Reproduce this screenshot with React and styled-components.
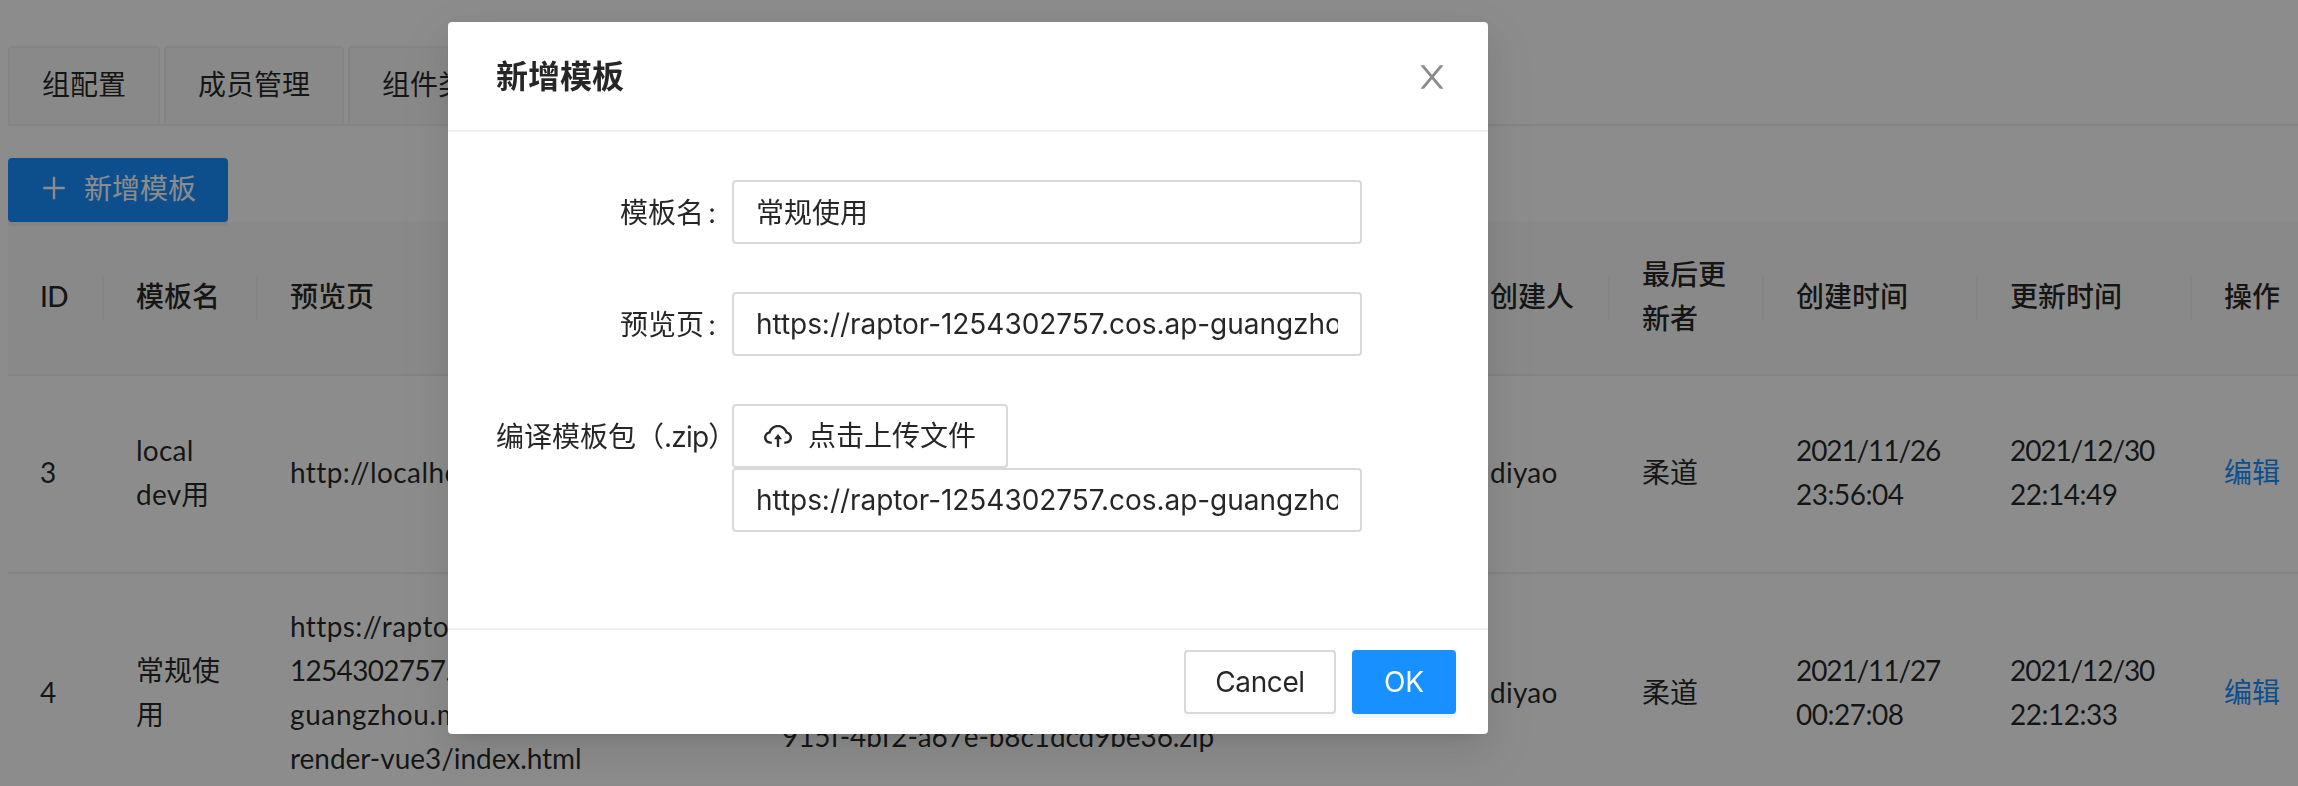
import React from "react";
import styled, { createGlobalStyle } from "styled-components";

const GlobalStyle = createGlobalStyle`
  * { box-sizing: border-box; }
  html, body { margin: 0; background: #fff; }
  body {
    overflow: hidden;
    color: rgba(0, 0, 0, 0.85);
    font-family: Lato, "Noto Sans CJK SC", sans-serif;
    font-size: 28px;
    line-height: 44px;
  }
`;

const Page = styled.div`
  height: 786px;
  overflow: hidden;
  padding: 46px 0 0 8px;
`;

const Tabs = styled.nav`
  display: flex;
  gap: 4px;
  height: 80px;
  margin-bottom: 32px;
  border-bottom: 2px solid #f0f0f0;
`;

const Tab = styled.div`
  height: 80px;
  padding: 14px 32px;
  white-space: nowrap;
  background: #fafafa;
  border: 2px solid #f0f0f0;
  border-radius: 4px 4px 0 0;
`;

const Button = styled.button`
  display: inline-flex;
  align-items: center;
  justify-content: center;
  gap: 16px;
  width: ${(p) => p.$width}px;
  height: 64px;
  padding: 0 0 ${(p) => p.$lift || 0}px;
  font: inherit;
  line-height: 44px;
  letter-spacing: ${(p) => p.$tracking || 0}px;
  white-space: nowrap;
  color: ${(p) => (p.$primary ? "#fff" : "rgba(0, 0, 0, 0.85)")};
  background: ${(p) => (p.$primary ? "#1890ff" : "#fff")};
  border: 2px solid ${(p) => (p.$primary ? "#1890ff" : "#d9d9d9")};
  border-radius: 4px;
  box-shadow: 0 4px 0 ${(p) => (p.$primary ? "rgba(0, 0, 0, 0.045)" : "rgba(0, 0, 0, 0.015)")};
`;

const PageAction = styled.div`
  display: flex;
  height: 64px;
`;

const Table = styled.table`
  width: 2304px;
  table-layout: fixed;
  border-collapse: separate;
  border-spacing: 0;
`;

const Col = styled.col`
  width: ${(p) => p.$width}px;
`;

const HeadCell = styled.th`
  padding: 32px 0 32px 32px;
  text-align: left;
  font-weight: 500;
  background: #fafafa;
  border-bottom: 2px solid #f0f0f0;
`;

const HeadLabel = styled.div`
  display: flex;
  align-items: center;
  justify-content: space-between;
  &::after {
    content: "";
    width: 2px;
    height: 44px;
    background: ${(p) => (p.$last ? "transparent" : "#f0f0f0")};
  }
`;

const Cell = styled.td`
  padding: 32px 0 32px 32px;
  vertical-align: middle;
  white-space: nowrap;
  border-bottom: 2px solid #f0f0f0;
`;

const Line = styled.div`
  height: 44px;
  line-height: 40px;
  letter-spacing: ${(p) => p.$tracking || 0}px;
`;

const EditLink = styled.a`
  color: #1890ff;
`;

const Mask = styled.div`
  position: fixed;
  inset: 0;
  padding: 22px 0 0 448px;
  background: rgba(0, 0, 0, 0.45);
`;

const Dialog = styled.section`
  width: 1040px;
  font-family: Inter, "Noto Sans CJK SC", sans-serif;
  background: #fff;
  border-radius: 4px;
  box-shadow: 0 6px 12px -8px rgba(0, 0, 0, 0.12), 0 12px 32px rgba(0, 0, 0, 0.08),
    0 18px 56px 16px rgba(0, 0, 0, 0.05);
`;

const DialogHeader = styled.header`
  display: flex;
  align-items: center;
  justify-content: space-between;
  height: 110px;
  padding: 2px 40px 0 48px;
  border-bottom: 2px solid #f0f0f0;
`;

const DialogTitle = styled.h2`
  margin: 0;
  font-size: 32px;
  font-weight: 600;
  line-height: 44px;
`;

const DialogBody = styled.div`
  display: flex;
  flex-direction: column;
  gap: 48px;
  padding: 48px 48px 96px;
`;

const FormRow = styled.div`
  display: flex;
`;

const Label = styled.label`
  display: flex;
  justify-content: flex-end;
  flex: none;
  width: 236px;
  height: 64px;
  padding-right: ${(p) => (p.$wide ? 0 : 16)}px;
  line-height: 66px;
  white-space: nowrap;
  ${(p) => p.$wide && "justify-content: flex-start;"}
`;

const Colon = styled.span`
  margin-left: 4px;
  width: 8px;
`;

const Extension = styled.span`
  letter-spacing: -0.8px;
`;

const HalfWidth = styled.span`
  font-feature-settings: "halt";
`;

const Control = styled.div`
  display: flex;
  flex-direction: column;
  align-items: flex-start;
  width: 630px;
`;

const Input = styled.input`
  width: 630px;
  height: 64px;
  padding: ${(p) => (p.$url ? "8px 22px" : "7px 22px 9px")};
  font: inherit;
  letter-spacing: ${(p) => (p.$url ? "-0.05px" : 0)};
  color: rgba(0, 0, 0, 0.85);
  background: #fff;
  border: 2px solid #d9d9d9;
  border-radius: 4px;
  outline: none;
`;

const DialogFooter = styled.footer`
  display: flex;
  justify-content: flex-end;
  gap: 16px;
  padding: 20px 32px;
  border-top: 2px solid #f0f0f0;
`;

const Icon = styled.svg`
  flex: none;
  width: ${(p) => p.$size}px;
  height: ${(p) => p.$size}px;
  fill: currentColor;
`;

const CloseButton = styled.button`
  display: flex;
  padding: 0;
  color: rgba(0, 0, 0, 0.45);
  background: none;
  border: 0;
`;

const PlusIcon = () => (
  <Icon $size={28} viewBox="64 64 896 896">
    <path d="M482 152h60q8 0 8 8v704q0 8-8 8h-60q-8 0-8-8V160q0-8 8-8z" />
    <path d="M176 474h672q8 0 8 8v60q0 8-8 8H176q-8 0-8-8v-60q0-8 8-8z" />
  </Icon>
);

const CloseIcon = () => (
  <Icon $size={32} viewBox="64 64 896 896">
    <path d="M563.8 512l262.5-312.9c4.4-5.2.7-13.1-6.1-13.1h-79.8c-4.7 0-9.2 2.1-12.3 5.7L511.6 449.8 295.1 191.7c-3-3.6-7.5-5.7-12.3-5.7H203c-6.8 0-10.5 7.9-6.1 13.1L459.4 512 196.9 824.9A7.95 7.95 0 00203 838h79.8c4.7 0 9.2-2.1 12.3-5.7l216.5-258.1 216.5 258.1c3 3.6 7.5 5.7 12.3 5.7h79.8c6.8 0 10.5-7.9 6.1-13.1L563.8 512z" />
  </Icon>
);

const CloudUploadIcon = () => (
  <Icon $size={28} viewBox="64 64 896 896">
    <path d="M518.3 459a8 8 0 00-12.6 0l-112 141.7a7.98 7.98 0 006.3 12.9h73.9V856c0 4.4 3.6 8 8 8h60c4.4 0 8-3.6 8-8V613.7H624c6.7 0 10.4-7.7 6.3-12.9L518.3 459z" />
    <path d="M811.4 366.7C765.6 245.9 648.9 160 512.2 160S258.8 245.8 213 366.6C127.3 389.1 64 467.2 64 560c0 110.5 89.5 200 199.9 200H304c4.4 0 8-3.6 8-8v-60c0-4.4-3.6-8-8-8h-40.1c-33.7 0-65.4-13.4-89-37.7-23.5-24.2-36-56.8-34.9-90.6.9-26.4 9.9-51.2 26.2-72.1 16.7-21.3 40.1-36.8 66.1-43.7l37.9-9.9 13.9-36.6c8.6-22.8 20.6-44.1 35.7-63.4a245.6 245.6 0 0152.4-49.9c41.1-28.9 89.5-44.2 140-44.2s98.9 15.3 140 44.2c19.9 14 37.5 30.8 52.4 49.9 15.1 19.3 27.1 40.7 35.7 63.4l13.8 36.5 37.8 10C846.1 454.5 884 503.8 884 560c0 33.1-12.9 64.3-36.3 87.7a123.07 123.07 0 01-87.6 36.3H720c-4.4 0-8 3.6-8 8v60c0 4.4 3.6 8 8 8h40.1C870.5 760 960 670.5 960 560c0-92.7-63.1-170.7-148.6-193.3z" />
  </Icon>
);

const columns = [
  { width: 96, title: ["ID"] },
  { width: 154, title: ["模板名"] },
  { width: 492, title: ["预览页"] },
  { width: 708, title: ["编译模板包"] },
  { width: 152, title: ["创建人"] },
  { width: 154, title: ["最后更", "新者"] },
  { width: 214, title: ["创建时间"] },
  { width: 214, title: ["更新时间"] },
  { width: 120, title: ["操作"] },
];

const rows = [
  [
    ["3"],
    ["local", "dev用"],
    ["http://localhost:3000/"],
    ["https://raptor-1254302757.cos.ap-", "guangzhou.myqcloud.com/", "template.zip"],
    ["diyao"],
    ["柔道"],
    ["2021/11/26", "23:56:04"],
    ["2021/12/30", "22:14:49"],
  ],
  [
    ["4"],
    ["常规使", "用"],
    ["https://raptor-", "1254302757.cos.ap-", "guangzhou.myqcloud.com/", "render-vue3/index.html"],
    ["https://raptor-1254302757.cos.ap-", "guangzhou.myqcloud.com/", "915f-4bf2-a67e-b8c1dcd9be36.zip"],
    ["diyao"],
    ["柔道"],
    ["2021/11/27", "00:27:08"],
    ["2021/12/30", "22:12:33"],
  ],
];

const fileUrl = "https://raptor-1254302757.cos.ap-guangzhou.myqcloud.com/";

const trackingFor = (text) => {
  if (text === "ID") return -0.8;
  if (/^\d{4}\//.test(text)) return -1.1;
  if (/^\d\d:/.test(text)) return -0.5;
  if (/^\d{10}/.test(text)) return -0.7;
  if (/^915f/.test(text)) return -0.1;
  if (/^render/.test(text)) return -0.04;
  if (/^http/.test(text)) return 0.4;
  if (/^guang/.test(text)) return 0.6;
  if (/^[a-z]/.test(text)) return 0.25;
  return 0;
};

const Lines = ({ items }) => (
  <div>
    {items.map((text) => (
      <Line key={text} $tracking={trackingFor(text)}>
        {text}
      </Line>
    ))}
  </div>
);

export default function App() {
  return (
    <>
      <GlobalStyle />
      <Page>
        <Tabs>
          <Tab>组配置</Tab>
          <Tab>成员管理</Tab>
          <Tab>组件类型</Tab>
        </Tabs>
        <PageAction>
          <Button $primary $width={220} $lift={4}>
            <PlusIcon />
            新增模板
          </Button>
        </PageAction>
        <Table>
          <colgroup>
            {columns.map((c) => (
              <Col key={c.title[0]} $width={c.width} />
            ))}
          </colgroup>
          <thead>
            <tr>
              {columns.map((c, i) => (
                <HeadCell key={c.title[0]}>
                  <HeadLabel $last={i === columns.length - 1}>
                    <Lines items={c.title} />
                  </HeadLabel>
                </HeadCell>
              ))}
            </tr>
          </thead>
          <tbody>
            {rows.map((row) => (
              <tr key={row[0][0]}>
                {row.map((items, i) => (
                  <Cell key={columns[i].title[0]}>
                    <Lines items={items} />
                  </Cell>
                ))}
                <Cell>
                  <Line>
                    <EditLink>编辑</EditLink>
                  </Line>
                </Cell>
              </tr>
            ))}
          </tbody>
        </Table>
      </Page>
      <Mask>
        <Dialog>
          <DialogHeader>
            <DialogTitle>新增模板</DialogTitle>
            <CloseButton aria-label="Close">
              <CloseIcon />
            </CloseButton>
          </DialogHeader>
          <DialogBody>
            <FormRow>
              <Label>
                模板名<Colon>:</Colon>
              </Label>
              <Control>
                <Input readOnly value="常规使用" />
              </Control>
            </FormRow>
            <FormRow>
              <Label>
                预览页<Colon>:</Colon>
              </Label>
              <Control>
                <Input $url readOnly value={fileUrl} />
              </Control>
            </FormRow>
            <FormRow>
              <Label $wide>
                编译模板包（<Extension>.zip</Extension>
                <HalfWidth>）</HalfWidth>
              </Label>
              <Control>
                <Button $width={276}>
                  <CloudUploadIcon />
                  点击上传文件
                </Button>
                <Input $url readOnly value={fileUrl} />
              </Control>
            </FormRow>
          </DialogBody>
          <DialogFooter>
            <Button $width={152} $tracking={-0.4}>
              Cancel
            </Button>
            <Button $primary $width={104}>
              OK
            </Button>
          </DialogFooter>
        </Dialog>
      </Mask>
    </>
  );
}
